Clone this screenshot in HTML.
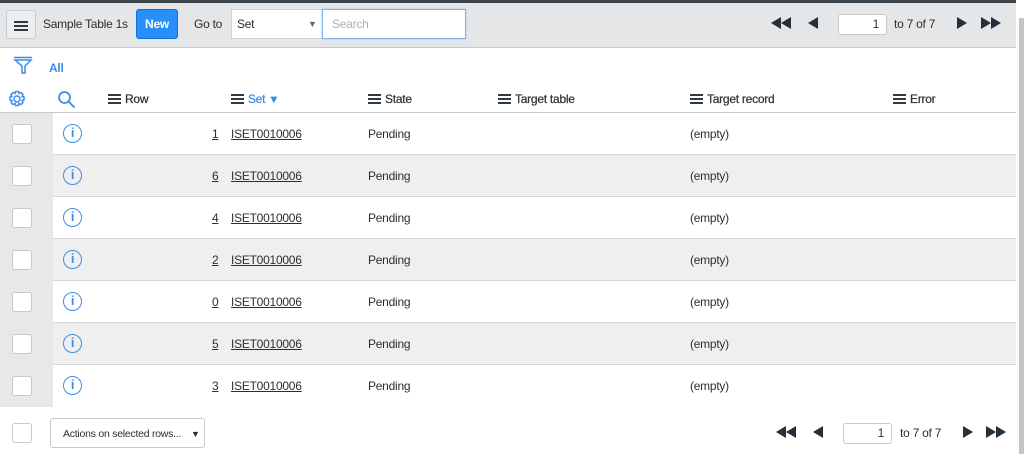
<!DOCTYPE html>
<html><head><meta charset="utf-8"><style>
*{box-sizing:border-box;margin:0;padding:0}
body{width:1024px;height:454px;overflow:hidden;background:#fff;font-family:"Liberation Sans",sans-serif;font-size:12px;letter-spacing:-0.25px;color:#2e2e2e;position:relative}
.a{position:absolute}
.hdr{left:0;top:0;width:1016px;height:48px;background:#e4e6e7;border-top:3px solid #3d464d;border-bottom:1px solid #c9c9c9}
.btn{border:1px solid #c9cbcd;border-radius:3px;background:#eceeef}
.cb{width:20px;height:20px;border:1px solid #c9c9c9;border-radius:3px;background:#fff}
.ham{display:inline-block;width:13px;height:10px;border-top:2px solid #2e3a44;border-bottom:2px solid #2e3a44;position:relative;vertical-align:-1px;margin-right:4px}
.ham:after{content:"";position:absolute;left:0;right:0;top:2px;border-top:2px solid #2e3a44}
.th{top:92px;color:#333;-webkit-text-stroke:0.25px #333}
.row{left:0;width:1016px;height:42px;border-bottom:1px solid #d6d6d6}
.info{width:19px;height:19px;border:1.5px solid #3f8ce8;border-radius:50%;color:#3f8ce8;font:bold 13px "Liberation Sans",sans-serif;text-align:center;line-height:16px}
.lnk{text-decoration:underline;color:#2e2e2e}
.tri{width:0;height:0;border-top:6.5px solid transparent;border-bottom:6.5px solid transparent}
.l{border-right:10px solid #26303a}.r{border-left:10px solid #26303a}
.pg{width:49px;height:21px;border:1px solid #c9c9c9;border-radius:3px;background:#fff;text-align:right;padding-right:7px;line-height:19px}
</style></head><body>
<div class="a hdr"></div>
<div class="a btn" style="left:6px;top:10px;width:30px;height:29px"><span class="ham a" style="left:7px;top:8px;width:14px"></span></div>
<div class="a" style="left:43px;top:17px">Sample Table 1s</div>
<div class="a" style="left:136px;top:9px;width:42px;height:30px;background:#278efc;border:1px solid #1a6fd0;border-radius:3px;color:#fff;font-weight:bold;text-align:center;line-height:28px">New</div>
<div class="a" style="left:194px;top:17px">Go to</div>
<div class="a" style="left:231px;top:9px;width:92px;height:30px;background:#fff;border:1px solid #d0d0d0"><span class="a" style="left:5px;top:7px">Set</span><span class="a" style="left:76px;top:9px;font-size:9px;color:#666">▼</span></div>
<div class="a" style="left:322px;top:9px;width:144px;height:30px;background:#fff;border:1px solid #7fb3ec;box-shadow:0 0 2px #9cc6f3;color:#b0b0b0;padding:7px 9px">Search</div>
<div class="a tri l" style="left:771px;top:17px"></div><div class="a tri l" style="left:781px;top:17px"></div>
<div class="a tri l" style="left:808px;top:17px"></div>
<div class="a pg" style="left:838px;top:14px">1</div>
<div class="a" style="left:894px;top:17px">to 7 of 7</div>
<div class="a tri r" style="left:957px;top:17px"></div>
<div class="a tri r" style="left:981px;top:17px"></div><div class="a tri r" style="left:991px;top:17px"></div>
<div class="a" style="left:1016px;top:3px;width:8px;height:451px;background:#fff"></div>
<div class="a" style="left:1019px;top:18px;width:5px;height:436px;background:#c4c4c4"></div>
<svg class="a" style="left:13px;top:56px" width="20" height="20" viewBox="0 0 20 20" fill="none" stroke="#3f8ce8" stroke-width="1.5"><path d="M1 1.5h18M2 4h16l-6 6v7h-3v-7z"/></svg>
<div class="a" style="left:49px;top:61px;color:#3f8ce8;font-weight:bold">All</div>
<svg class="a" style="left:8px;top:90px" width="18" height="18" viewBox="0 0 18 18" fill="none" stroke="#3f8ce8" stroke-width="1.5"><circle cx="9" cy="9" r="3"/><path d="M7.5 1.5h3l.5 2 2-1 2 2-1 2 2 .5v3l-2 .5 1 2-2 2-2-1-.5 2h-3l-.5-2-2 1-2-2 1-2-2-.5v-3l2-.5-1-2 2-2 2 1z"/></svg>
<svg class="a" style="left:57px;top:90px" width="19" height="19" viewBox="0 0 19 19" fill="none" stroke="#3f8ce8" stroke-width="1.8"><circle cx="7.5" cy="7.5" r="5.5"/><path d="M11.5 11.5l6 6"/></svg>
<div class="a th" style="left:108px"><span class="ham"></span>Row</div>
<div class="a th" style="left:231px;color:#3f8ce8;-webkit-text-stroke-color:#3f8ce8"><span class="ham"></span>Set <span style="font-size:11px">▼</span></div>
<div class="a th" style="left:368px"><span class="ham"></span>State</div>
<div class="a th" style="left:498px"><span class="ham"></span>Target table</div>
<div class="a th" style="left:690px"><span class="ham"></span>Target record</div>
<div class="a th" style="left:893px"><span class="ham"></span>Error</div>
<div class="a" style="left:0;top:112px;width:1016px;border-top:1px solid #c9c9c9"></div>
<div class="a" style="left:0;top:113px;width:53px;height:294px;background:#e7e8e9"></div>

<div class="a row" style="top:113px;left:53px;width:963px"></div>
<div class="a row" style="top:155px;left:53px;width:963px;background:#efefef"></div>
<div class="a row" style="top:197px;left:53px;width:963px"></div>
<div class="a row" style="top:239px;left:53px;width:963px;background:#efefef"></div>
<div class="a row" style="top:281px;left:53px;width:963px"></div>
<div class="a row" style="top:323px;left:53px;width:963px;background:#efefef"></div>
<div class="a row" style="top:365px;left:53px;width:963px;border-bottom:none"></div>

<div class="a cb" style="left:12px;top:124px"></div><div class="a info" style="left:63px;top:124px">i</div><div class="a lnk" style="left:212px;top:127px">1</div><div class="a lnk" style="left:231px;top:127px">ISET0010006</div><div class="a" style="left:368px;top:127px">Pending</div><div class="a" style="left:690px;top:127px">(empty)</div>
<div class="a cb" style="left:12px;top:166px"></div><div class="a info" style="left:63px;top:166px">i</div><div class="a lnk" style="left:212px;top:169px">6</div><div class="a lnk" style="left:231px;top:169px">ISET0010006</div><div class="a" style="left:368px;top:169px">Pending</div><div class="a" style="left:690px;top:169px">(empty)</div>
<div class="a cb" style="left:12px;top:208px"></div><div class="a info" style="left:63px;top:208px">i</div><div class="a lnk" style="left:212px;top:211px">4</div><div class="a lnk" style="left:231px;top:211px">ISET0010006</div><div class="a" style="left:368px;top:211px">Pending</div><div class="a" style="left:690px;top:211px">(empty)</div>
<div class="a cb" style="left:12px;top:250px"></div><div class="a info" style="left:63px;top:250px">i</div><div class="a lnk" style="left:212px;top:253px">2</div><div class="a lnk" style="left:231px;top:253px">ISET0010006</div><div class="a" style="left:368px;top:253px">Pending</div><div class="a" style="left:690px;top:253px">(empty)</div>
<div class="a cb" style="left:12px;top:292px"></div><div class="a info" style="left:63px;top:292px">i</div><div class="a lnk" style="left:212px;top:295px">0</div><div class="a lnk" style="left:231px;top:295px">ISET0010006</div><div class="a" style="left:368px;top:295px">Pending</div><div class="a" style="left:690px;top:295px">(empty)</div>
<div class="a cb" style="left:12px;top:334px"></div><div class="a info" style="left:63px;top:334px">i</div><div class="a lnk" style="left:212px;top:337px">5</div><div class="a lnk" style="left:231px;top:337px">ISET0010006</div><div class="a" style="left:368px;top:337px">Pending</div><div class="a" style="left:690px;top:337px">(empty)</div>
<div class="a cb" style="left:12px;top:376px"></div><div class="a info" style="left:63px;top:376px">i</div><div class="a lnk" style="left:212px;top:379px">3</div><div class="a lnk" style="left:231px;top:379px">ISET0010006</div><div class="a" style="left:368px;top:379px">Pending</div><div class="a" style="left:690px;top:379px">(empty)</div>

<div class="a cb" style="left:12px;top:423px"></div>
<div class="a" style="left:50px;top:418px;width:155px;height:30px;border:1px solid #c9c9c9;border-radius:3px;background:#fff;font-size:10.5px;padding:9px 12px">Actions on selected rows...<span class="a" style="left:140px;top:10px;font-size:9px">▼</span></div>
<div class="a tri l" style="left:776px;top:426px"></div><div class="a tri l" style="left:786px;top:426px"></div>
<div class="a tri l" style="left:813px;top:426px"></div>
<div class="a pg" style="left:843px;top:423px">1</div>
<div class="a" style="left:900px;top:426px">to 7 of 7</div>
<div class="a tri r" style="left:963px;top:426px"></div>
<div class="a tri r" style="left:986px;top:426px"></div><div class="a tri r" style="left:996px;top:426px"></div>
</body></html>
